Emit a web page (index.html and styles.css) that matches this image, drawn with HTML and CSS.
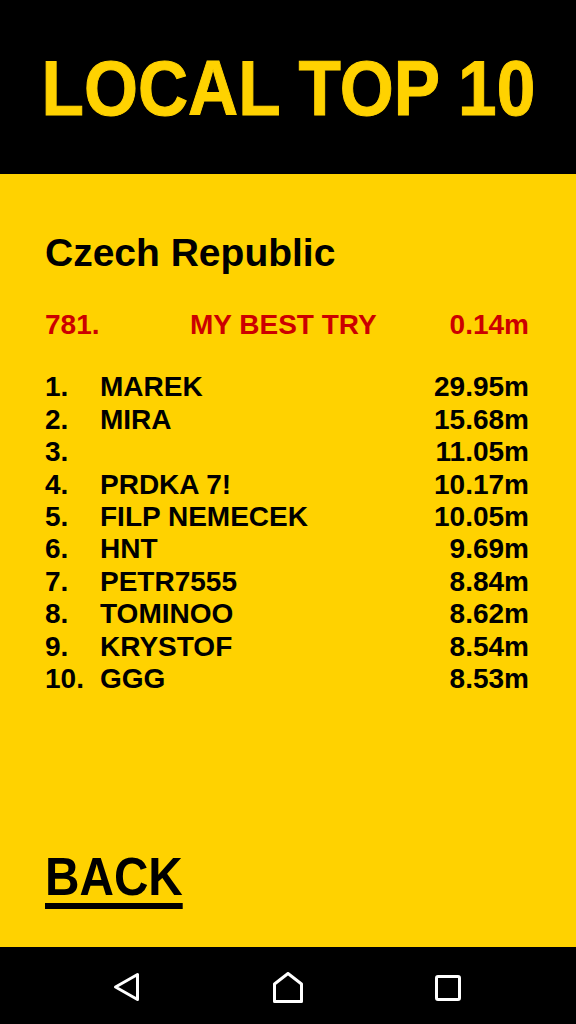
FILE: index.html
```html
<!DOCTYPE html>
<html>
<head>
<meta charset="utf-8">
<link rel="stylesheet" href="styles.css">
</head>
<body>
<div class="screen">
  <header class="top">
    <h1 class="title">LOCAL TOP 10</h1>
  </header>
  <main class="board">
    <h2 class="country">Czech Republic</h2>
    <div class="mine">
      <span>781.</span><span>MY BEST TRY</span><span class="dist">0.14m</span>
    </div>
    <ol class="list">
      <li class="row"><span>1.</span><span>MAREK</span><span class="dist">29.95m</span></li>
      <li class="row"><span>2.</span><span>MIRA</span><span class="dist">15.68m</span></li>
      <li class="row"><span>3.</span><span></span><span class="dist">11.05m</span></li>
      <li class="row"><span>4.</span><span>PRDKA 7!</span><span class="dist">10.17m</span></li>
      <li class="row"><span>5.</span><span>FILP NEMECEK</span><span class="dist">10.05m</span></li>
      <li class="row"><span>6.</span><span>HNT</span><span class="dist">9.69m</span></li>
      <li class="row"><span>7.</span><span>PETR7555</span><span class="dist">8.84m</span></li>
      <li class="row"><span>8.</span><span>TOMINOO</span><span class="dist">8.62m</span></li>
      <li class="row"><span>9.</span><span>KRYSTOF</span><span class="dist">8.54m</span></li>
      <li class="row"><span>10.</span><span>GGG</span><span class="dist">8.53m</span></li>
    </ol>
    <div class="back-wrap"><span class="back">BACK</span></div>
  </main>
  <nav class="nav">
    <div class="nav-btn">
      <svg width="32" height="32" viewBox="0 0 32 32"><path d="M3.5 15 L25.5 2.5 L25.5 27.5 Z" fill="none" stroke="#fff" stroke-width="3" stroke-linejoin="round"/></svg>
    </div>
    <div class="nav-btn">
      <svg width="32" height="32" viewBox="0 0 32 32"><path d="M2.5 29.5 L2.5 12 L16 1.5 L29.5 12 L29.5 29.5 Z" fill="none" stroke="#fff" stroke-width="3" stroke-linejoin="round"/></svg>
    </div>
    <div class="nav-btn">
      <svg width="32" height="32" viewBox="0 0 32 32"><rect x="4.5" y="4.5" width="23" height="23" rx="1.5" fill="none" stroke="#fff" stroke-width="3"/></svg>
    </div>
  </nav>
</div>
</body>
</html>
```

FILE: styles.css
```css
html, body {
  margin: 0;
  padding: 0;
  background: #000;
}
.screen {
  width: 576px;
  height: 1024px;
  display: flex;
  flex-direction: column;
  font-family: "Liberation Sans", Arial, sans-serif;
  font-weight: bold;
}
.top {
  height: 174px;
  background: #000;
  display: flex;
  justify-content: center;
  box-sizing: border-box;
  padding-top: 44px;
  overflow: hidden;
}
.title {
  margin: 0;
  display: inline-block;
  font-family: "Liberation Sans", Arial, sans-serif;
  font-weight: bold;
  font-size: 78px;
  line-height: 88px;
  color: #ffd200;
  -webkit-text-stroke: 1px #ffd200;
  white-space: nowrap;
  transform: scaleX(0.89);
  transform-origin: center;
}
.board {
  height: 773px;
  box-sizing: border-box;
  background: #ffd200;
  padding: 56px 47px 38px 45px;
  display: flex;
  flex-direction: column;
  color: #000;
}
.country {
  margin: 0;
  font-size: 39px;
  line-height: 45px;
  font-weight: bold;
}
.mine {
  margin-top: 34px;
  display: grid;
  grid-template-columns: 145px 1fr auto;
  font-size: 28px;
  line-height: 32.4px;
  color: #cc0000;
}
.list {
  list-style: none;
  margin: 30px 0 0 0;
  padding: 0;
}
.row {
  display: grid;
  grid-template-columns: 55px 1fr auto;
  font-size: 28px;
  line-height: 32.4px;
}
.dist {
  text-align: right;
}
.back-wrap {
  margin-top: auto;
}
.back {
  display: inline-block;
  font-size: 53px;
  line-height: 53px;
  border-bottom: 6px solid #000;
  transform: scaleX(0.9);
  transform-origin: left center;
}
.nav {
  height: 77px;
  background: #000;
  display: grid;
  grid-template-columns: 160px 160px 160px;
  justify-content: center;
  align-items: center;
  padding-top: 5px;
  box-sizing: border-box;
}
.nav-btn {
  display: flex;
  justify-content: center;
  align-items: center;
}
```
